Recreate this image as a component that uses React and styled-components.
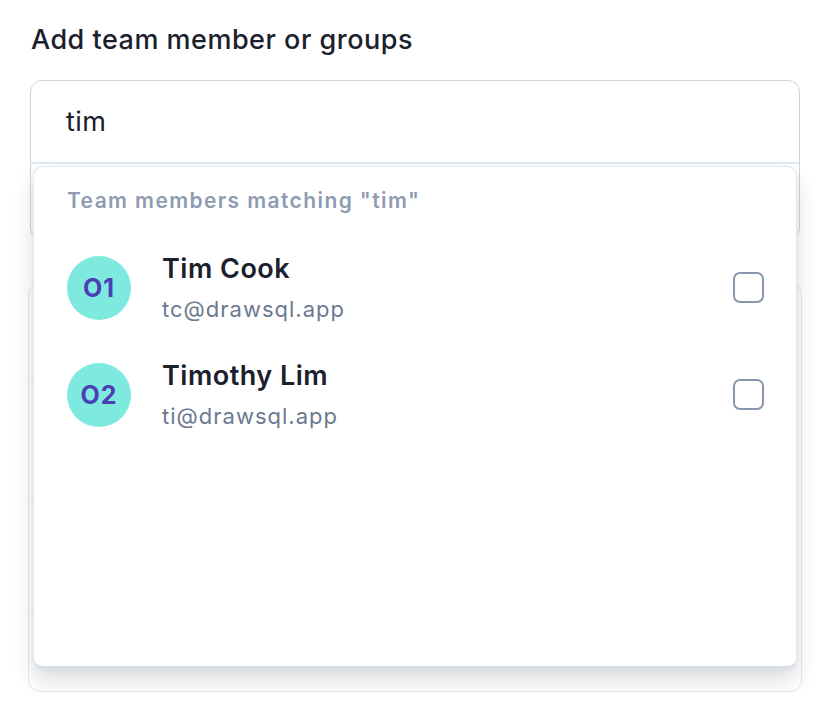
import styled, { createGlobalStyle } from 'styled-components';

const GlobalStyle = createGlobalStyle`
  html, body {
    margin: 0;
    padding: 0;
    background: #ffffff;
  }
  body {
    font-family: Inter, "Noto Sans", "Liberation Sans", sans-serif;
    -webkit-font-smoothing: antialiased;
  }
`;

const members = [
  { id: 'O1', name: 'Tim Cook', email: 'tc@drawsql.app' },
  { id: 'O2', name: 'Timothy Lim', email: 'ti@drawsql.app' },
];

const backRows = [97, 120, 110, 82];

const App = () => {
  return (
    <>
      <GlobalStyle />
      <StPage>
        <StLabel>Add team member or groups</StLabel>
        <StField>
          <StInputBox>
            <StInputRow>tim</StInputRow>
          </StInputBox>
          <StBackPanel>
            {backRows.map((h, i) => (
              <StBackRow key={i} $h={h} $last={i === backRows.length - 1} />
            ))}
          </StBackPanel>
          <StDropdown>
            <StHeading>Team members matching "tim"</StHeading>
            {members.map((m) => (
              <StRow key={m.id}>
                <StAvatar>{m.id}</StAvatar>
                <StInfo>
                  <StName>{m.name}</StName>
                  <StEmail>{m.email}</StEmail>
                </StInfo>
                <StCheckbox />
              </StRow>
            ))}
          </StDropdown>
        </StField>
      </StPage>
    </>
  );
};

export default App;

const StPage = styled.div`
  padding: 24px 28px 0 30px;
  width: 770px;
`;

const StLabel = styled.div`
  font-size: 27px;
  line-height: 32px;
  font-weight: 500;
  letter-spacing: 0.5px;
  color: #1a202c;
  padding-left: 1px;
`;

const StField = styled.div`
  position: relative;
  margin-top: 24px;
`;

const StInputBox = styled.div`
  height: 160px;
  box-sizing: border-box;
  border: 1.5px solid #cbd5e0;
  border-radius: 12px;
  background: #fff;
`;

const StInputRow = styled.div`
  height: 83px;
  box-sizing: border-box;
  padding: 0 0 0 35px;
  display: flex;
  align-items: center;
  font-size: 27px;
  letter-spacing: 0.4px;
  color: #1a202c;
  border-bottom: 2px solid #e2e8f0;
`;

const StBackPanel = styled.div`
  margin: 43px -2px 0;
  height: 409px;
  box-sizing: border-box;
  border: 1.5px solid #e2e8f0;
  border-radius: 12px;
  display: flex;
  flex-direction: column;
  background: #fff;
`;

const StBackRow = styled.div`
  height: ${({ $h }) => $h}px;
  flex-shrink: 0;
  border-bottom: ${({ $last }) => ($last ? 'none' : '1px solid #edf1f5')};
`;

const StDropdown = styled.div`
  position: absolute;
  top: 86px;
  left: 3px;
  right: 3px;
  height: 502px;
  box-sizing: border-box;
  background: #fff;
  border: 1px solid #e2e8f0;
  border-bottom: 2px solid #d8dee6;
  border-radius: 10px;
  box-shadow: 0 14px 22px rgba(30, 41, 59, 0.14), 0 2px 6px rgba(30, 41, 59, 0.06);
  padding: 20px 32px 0 33px;
`;

const StHeading = styled.div`
  font-size: 21px;
  line-height: 28px;
  font-weight: 600;
  letter-spacing: 1.4px;
  color: #8f9bb1;
  margin-bottom: 19px;
`;

const StRow = styled.div`
  display: flex;
  align-items: center;
  height: 107px;
`;

const StAvatar = styled.div`
  width: 64px;
  height: 64px;
  border-radius: 50%;
  background: #7eeadf;
  color: #4a3fb3;
  font-size: 25px;
  font-weight: 700;
  letter-spacing: 1px;
  display: flex;
  align-items: center;
  justify-content: center;
  flex-shrink: 0;
`;

const StInfo = styled.div`
  flex: 1;
  margin-left: 31px;
  display: flex;
  flex-direction: column;
  gap: 10px;
`;

const StName = styled.div`
  font-size: 27px;
  line-height: 32px;
  font-weight: 600;
  letter-spacing: 0.5px;
  color: #1a202c;
`;

const StEmail = styled.div`
  font-size: 22px;
  line-height: 28px;
  letter-spacing: 1px;
  color: #6b7a90;
`;

const StCheckbox = styled.div`
  width: 31px;
  height: 31px;
  box-sizing: border-box;
  border: 2px solid #8896ad;
  border-radius: 7px;
  flex-shrink: 0;
`;
